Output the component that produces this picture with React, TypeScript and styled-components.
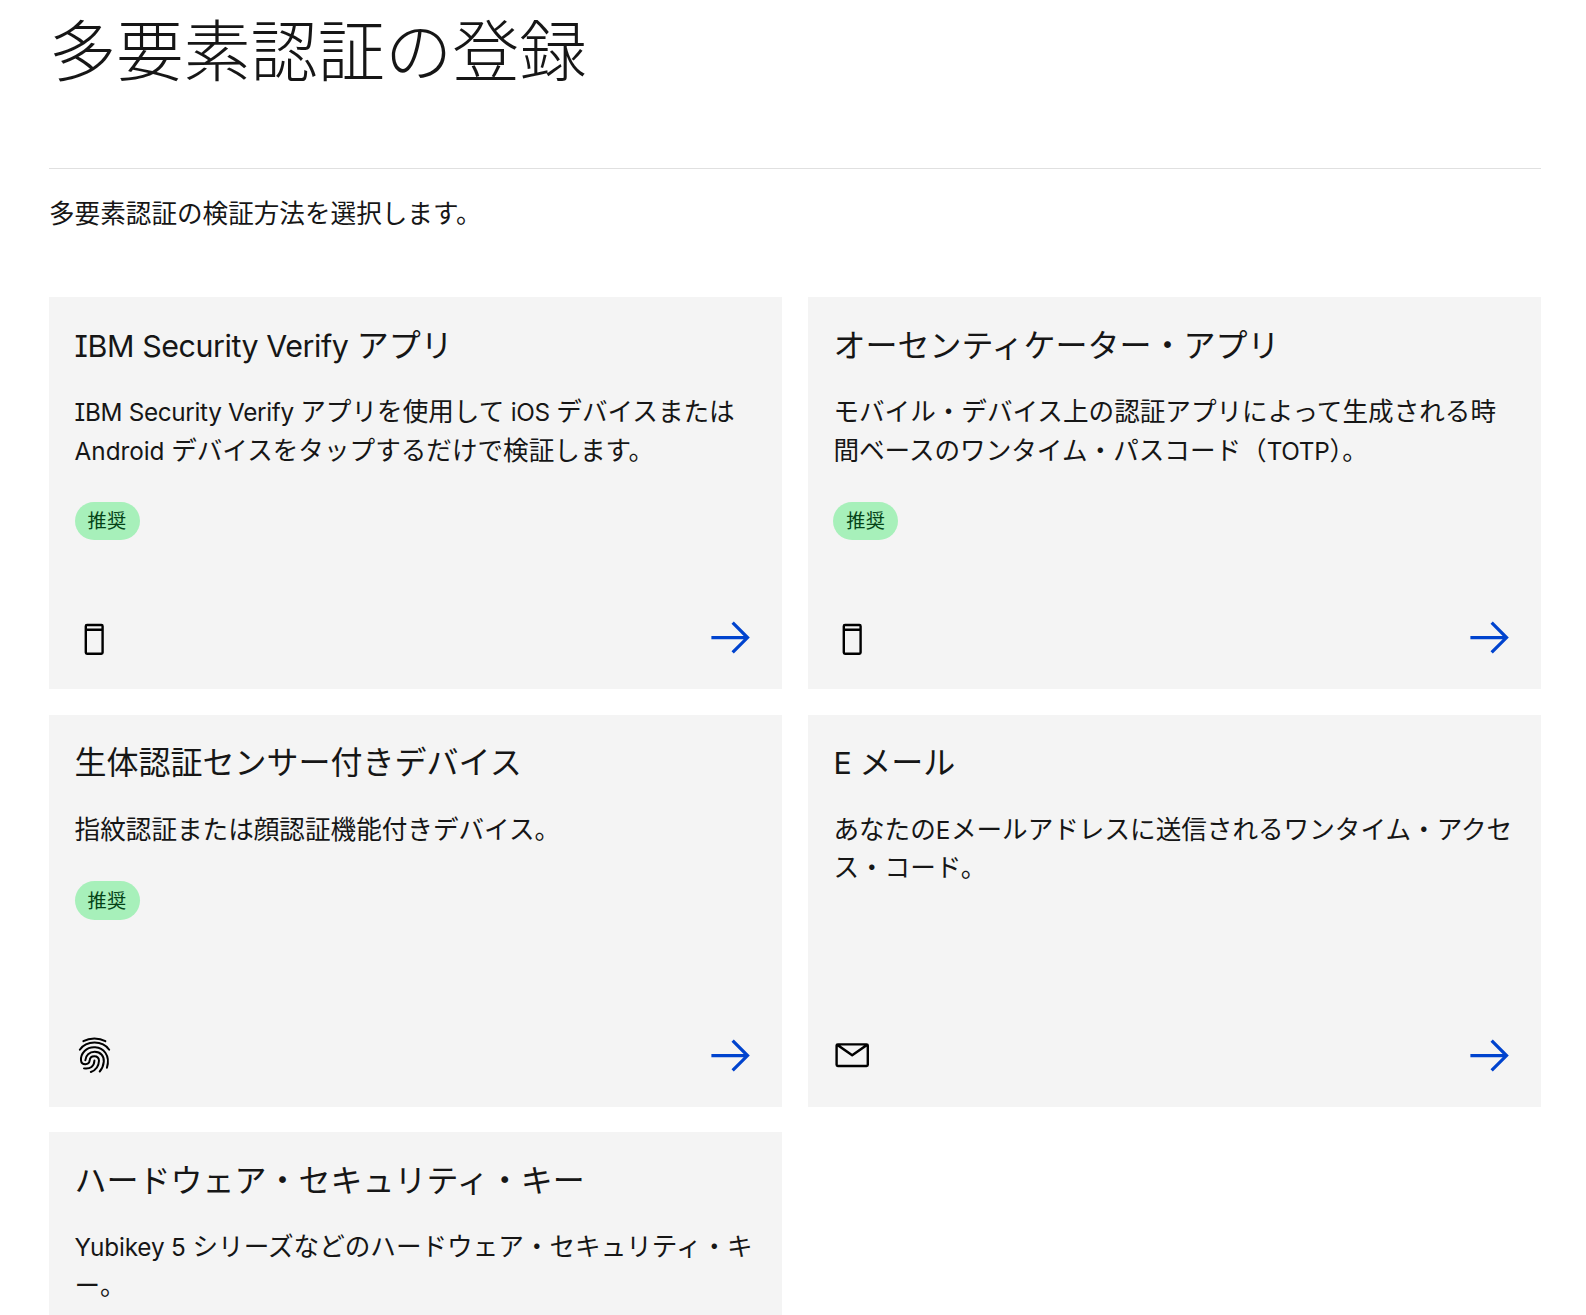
import React from "react";
import styled, { createGlobalStyle } from "styled-components";

const GlobalStyle = createGlobalStyle`
  *, *::before, *::after { box-sizing: border-box; }
  html, body { margin: 0; padding: 0; background: #ffffff; }
  body {
    color: #161616;
    font-family: "Noto Sans CJK JP", sans-serif;
    font-size: 25.6px;
    line-height: 38.4px;
  }
  h1, h2, p { margin: 0; font-weight: 400; }
`;

const Page = styled.main`
  display: flex;
  flex-direction: column;
  width: 1586px;
  height: 1315px;
  overflow: hidden;
  padding: 0 45px 0 49px;
`;

const Title = styled.h1`
  flex: none;
  height: 168px;
  font-size: 67.2px;
  line-height: 94px;
  && { font-weight: 300; }
`;

const Rule = styled.hr`
  flex: none;
  width: 100%;
  height: 1px;
  margin: 0 0 24px;
  border: 0;
  background: #e0e0e0;
`;

const Intro = styled.p`
  flex: none;
  margin-bottom: 65.6px;
`;

const Grid = styled.div`
  display: grid;
  grid-template-columns: repeat(2, minmax(0, 1fr));
  grid-auto-rows: 392px;
  gap: 25.6px;
`;

const Card = styled.section`
  display: flex;
  flex-direction: column;
  align-items: flex-start;
  padding: 23.6px 25.6px 25.6px;
  background: #f4f4f4;
`;

const CardTitle = styled.h2`
  margin-bottom: 25.9px;
  font-size: 32px;
  line-height: 44.8px;
`;

const Description = styled.p`
  margin-bottom: 33.9px;
  white-space: nowrap;
`;

const Latin = styled.span<{ $spacing?: number }>`
  font-family: Inter, "Noto Sans", sans-serif;
  font-size: 0.95em;
  line-height: 0;
  font-feature-settings: "cv08" 1;
  letter-spacing: ${({ $spacing = -0.014 }) => $spacing}em;
`;

const Tag = styled.span`
  display: inline-flex;
  align-items: center;
  height: 38.4px;
  padding: 0 12.8px;
  border-radius: 24px;
  background: #a7f0ba;
  color: #044317;
  font-size: 19.2px;
  line-height: 25.6px;
  letter-spacing: 0.5px;
`;

const CardFooter = styled.div`
  display: flex;
  align-items: center;
  justify-content: space-between;
  width: 100%;
  margin-top: auto;
`;

const Icon = styled.svg<{ $size: number; $color?: string }>`
  display: block;
  width: ${({ $size }) => $size}px;
  height: ${({ $size }) => $size}px;
  fill: ${({ $color = "#000000" }) => $color};
`;

const PhoneIcon = () => (
  <Icon $size={38.4} viewBox="0 0 32 32">
    <path d="M22 4H10a2 2 0 0 0-2 2v22a2 2 0 0 0 2 2h12a2 2 0 0 0 2-2V6a2 2 0 0 0-2-2Zm0 2v2H10V6ZM10 28V10h12v18Z" />
  </Icon>
);

const MailIcon = () => (
  <Icon $size={38.4} viewBox="0 0 32 32">
    <path d="M28 6H4a2 2 0 0 0-2 2v16a2 2 0 0 0 2 2h24a2 2 0 0 0 2-2V8a2 2 0 0 0-2-2Zm-2.2 2L16 14.78 6.2 8ZM4 24V8.910l11.430 7.910a1 1 0 0 0 1.140 0L28 8.910V24Z" />
  </Icon>
);

const FingerprintIcon = () => (
  <Icon $size={38.4} viewBox="0 0 32 32">
    <g fill="none" stroke="#000000" strokeWidth="1.65" strokeLinecap="round">
      <path d="M7 4.300C12.300 1.300 20 1.300 25.300 4.300" />
      <path d="M4 11.500C9.500 3.500 23 3.500 28.500 11.500" />
      <path d="M26.600 26.500C28.100 21.500 27.800 17.500 25.300 14C21.300 8.300 12.500 8 8 12.500C5.300 15.300 4.800 18 5 20.300C5.400 24.600 11.600 24.600 12.200 20.600C12.600 15.600 19.800 15.800 20 20.600C19.800 25.200 17 28.600 13.200 30" />
      <path d="M8.600 20.200C8.800 16 12 13.200 16.400 13.200C21.500 13.200 24.400 17 24 21.300C23.700 24.600 22.500 27.400 20.600 29.600" />
      <path d="M7.500 27C12.800 27.800 16 25.200 16.200 20.400" />
    </g>
  </Icon>
);

const ArrowIcon = () => (
  <Icon $size={51.2} $color="#0043ce" viewBox="0 0 32 32">
    <path d="m18 6-1.430 1.393L24.150 15H4v2h20.150l-7.580 7.573L18 26l10-10Z" />
  </Icon>
);

interface Method {
  title: React.ReactNode;
  lines: React.ReactNode[];
  recommended?: boolean;
  icon: React.ReactNode;
}

const methods: Method[] = [
  {
    title: <><Latin>IBM Security Verify </Latin>アプリ</>,
    lines: [
      <><Latin>IBM Security Verify </Latin>アプリを使用して<Latin> iOS </Latin>デバイスまたは</>,
      <><Latin $spacing={-0.002}>Android </Latin>デバイスをタップするだけで検証します。</>,
    ],
    recommended: true,
    icon: <PhoneIcon />,
  },
  {
    title: "オーセンティケーター・アプリ",
    lines: [
      "モバイル・デバイス上の認証アプリによって生成される時",
      <>間ベースのワンタイム・パスコード（<Latin>TOTP</Latin>）。</>,
    ],
    recommended: true,
    icon: <PhoneIcon />,
  },
  {
    title: "生体認証センサー付きデバイス",
    lines: ["指紋認証または顔認証機能付きデバイス。"],
    recommended: true,
    icon: <FingerprintIcon />,
  },
  {
    title: <><Latin $spacing={-0.015}>E </Latin>メール</>,
    lines: [
      <>あなたの<Latin $spacing={0.02}>E</Latin>メールアドレスに送信されるワンタイム・アクセ</>,
      "ス・コード。",
    ],
    icon: <MailIcon />,
  },
  {
    title: "ハードウェア・セキュリティ・キー",
    lines: [
      <><Latin $spacing={-0.006}>Yubikey 5 </Latin>シリーズなどのハードウェア・セキュリティ・キ</>,
      "ー。",
    ],
    icon: <PhoneIcon />,
  },
];

export default function App() {
  return (
    <Page lang="ja">
      <GlobalStyle />
      <Title>多要素認証の登録</Title>
      <Rule />
      <Intro>多要素認証の検証方法を選択します。</Intro>
      <Grid>
        {methods.map(({ title, lines, recommended, icon }, index) => (
          <Card key={index}>
            <CardTitle>{title}</CardTitle>
            <Description>
              {lines.map((line, i) => (
                <React.Fragment key={i}>
                  {i > 0 && <br />}
                  {line}
                </React.Fragment>
              ))}
            </Description>
            {recommended && <Tag>推奨</Tag>}
            <CardFooter>
              {icon}
              <ArrowIcon />
            </CardFooter>
          </Card>
        ))}
      </Grid>
    </Page>
  );
}
